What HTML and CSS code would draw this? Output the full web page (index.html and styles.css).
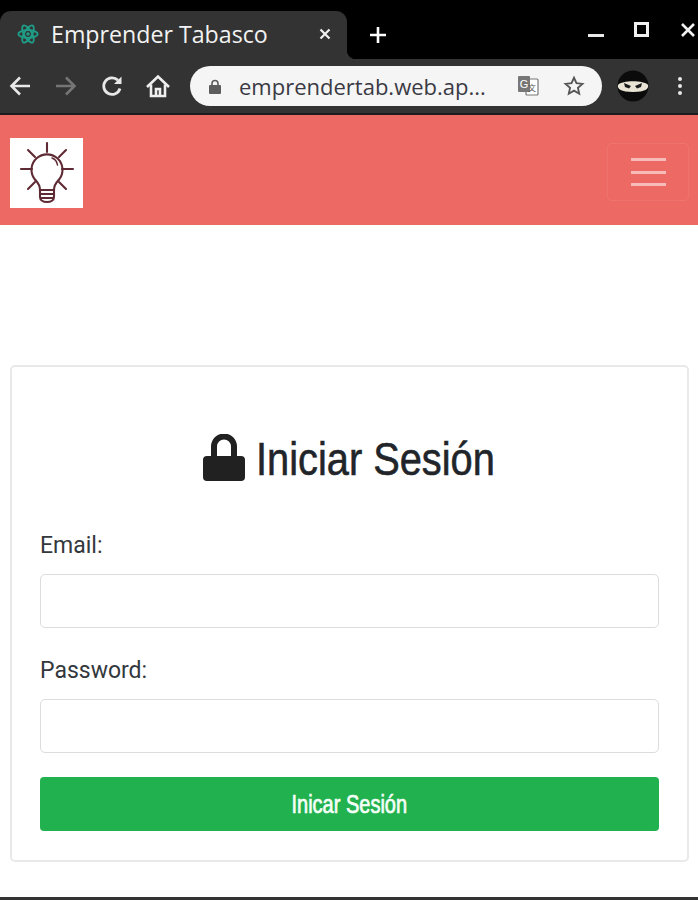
FILE: index.html
```html
<!DOCTYPE html>
<html lang="es">
<head>
    <meta charset="UTF-8">
    <meta name="viewport" content="width=device-width, initial-scale=1.0">
    <title>Emprender Tabasco</title>
    <link rel="stylesheet" href="styles.css">
</head>
<body>
    <div class="tabStrip">
        <div class="tab">
            <svg class="tabIcon" viewBox="0 0 24 24" fill="none" stroke="#1f9d87" stroke-width="2">
                <ellipse cx="12" cy="12" rx="10.5" ry="4.2"/>
                <ellipse cx="12" cy="12" rx="10.5" ry="4.2" transform="rotate(60 12 12)"/>
                <ellipse cx="12" cy="12" rx="10.5" ry="4.2" transform="rotate(120 12 12)"/>
                <circle cx="12" cy="12" r="2" fill="#1f9d87" stroke="none"/>
            </svg>
            <span class="tabTitle">Emprender Tabasco</span>
            <svg class="tabClose" viewBox="0 0 12 12" stroke="#f1f1f1" stroke-width="2.2">
                <path d="M1.5 1.5l9 9M10.5 1.5l-9 9"/>
            </svg>
        </div>
        <svg class="newTab" viewBox="0 0 18 18" stroke="#fff" stroke-width="2.6">
            <path d="M9 1v16M1 9h16"/>
        </svg>
        <div class="windowButtons">
            <svg class="winMin" viewBox="0 0 16 4" fill="#e8e8e8"><rect width="16" height="3"/></svg>
            <svg class="winMax" viewBox="0 0 15 15" fill="none" stroke="#f0f0f0" stroke-width="3"><rect x="1.5" y="1.5" width="12" height="12"/></svg>
            <svg class="winClose" viewBox="0 0 14 14" stroke="#f0f0f0" stroke-width="2.6"><path d="M1 1l12 12M13 1L1 13"/></svg>
        </div>
    </div>

    <div class="toolbar">
        <svg class="navIcon" viewBox="0 0 24 24" fill="none" stroke="#e8e8e8" stroke-width="2.6"><path d="M22 12H4M12 3.5L3.5 12l8.5 8.5"/></svg>
        <svg class="navIcon" viewBox="0 0 24 24" fill="none" stroke="#757575" stroke-width="2.6"><path d="M2 12h18M12 3.5l8.5 8.5-8.5 8.5"/></svg>
        <svg class="navIcon" viewBox="0 0 24 24" fill="none" stroke="#e8e8e8" stroke-width="2.8"><path d="M20 14.5A8.3 8.3 0 1 1 18 6.3"/><path d="M21.5 2.5v7.5H14z" fill="#e8e8e8" stroke="none"/></svg>
        <svg class="navIcon" viewBox="0 0 24 24" fill="none" stroke="#efefef" stroke-width="2.6"><path d="M1 13L12 2.500 23 13"/><path d="M5 10.500V22h14V10.500"/><path d="M10 22v-7h4v7"/></svg>
        <div class="omnibox">
            <svg class="lockSmall" viewBox="0 0 12 15"><path d="M3 7V4.500a3 3 0 0 1 6 0V7" fill="none" stroke="#5d5d5d" stroke-width="1.6"/><rect y="6" width="12" height="9" rx="1" fill="#5d5d5d"/></svg>
            <span class="url">emprendertab.web.ap...</span>
            <svg class="translate" viewBox="0 0 22 22">
                <rect x="9" y="4" width="12" height="16" rx="1" fill="#fff" stroke="#777" stroke-width="1.2"/>
                <rect x="1" y="1" width="12" height="16" rx="1" fill="#777"/>
                <text x="7" y="13" class="translateG">G</text>
                <text x="15" y="16" class="translateJ">文</text>
            </svg>
            <svg class="star" viewBox="0 0 24 24" fill="none" stroke="#555" stroke-width="2"><path d="M12 3l2.700 6 6.500.7-4.900 4.300 1.400 6.400-5.700-3.300-5.700 3.300 1.400-6.400-4.900-4.300 6.500-.7z"/></svg>
        </div>
        <svg class="avatar" viewBox="0 0 32 32">
            <circle cx="16" cy="16" r="15.500" fill="#0b0b0b"/>
            <path d="M1 15c4-5 26-5 30 0 1 4-3 7-15 7S0 19 1 15z" fill="#e9e3d6"/>
            <path d="M7 13l7 3-2 2.500-4-1.500zM25 13l-7 3 2 2.500 4-1.500z" fill="#1a1a1a"/>
        </svg>
        <svg class="menuDots" viewBox="0 0 4 18" fill="#e8e8e8"><circle cx="2" cy="2" r="2"/><circle cx="2" cy="9" r="2"/><circle cx="2" cy="16" r="2"/></svg>
    </div>

    <nav class="navbar">
        <div class="brand">
            <svg class="brandLogo" viewBox="0 0 73 70" fill="none" stroke="#5e2a33" stroke-width="2.1" stroke-linecap="round">
                <path d="M37 5v9M18 12l7 7M56 12l-7 7M11 31h11M52 31h11M25 44l-7 7M49 44l7 7"/>
                <path d="M30 52c0-6-3-8-5.500-11a15.500 15.500 0 1 1 25 0c-2.500 3-5.500 5-5.500 11z"/>
                <path d="M42 20c3 1 5 4 5.500 7" stroke-width="1.500"/>
                <path d="M30 52v7c0 3 3 5 7 5s7-2 7-5v-7M30 56h14M31 60h12"/>
            </svg>
        </div>
        <button class="navToggle">
            <span></span><span></span><span></span>
        </button>
    </nav>

    <main class="content">
        <div class="loginCard">
            <h1 class="loginTitle">
                <svg class="lockIcon" viewBox="0 0 42 47"><path d="M11 24V12.500a10 10 0 0 1 20 0V24" fill="none" stroke="#212121" stroke-width="6"/><rect y="22" width="42" height="25" rx="4" fill="#212121"/></svg>
                <span class="titleText">Iniciar Sesión</span>
            </h1>
            <form class="loginForm">
                <label class="fieldLabel" for="email">Email:</label>
                <input class="fieldInput" type="email" id="email">
                <label class="fieldLabel" for="password">Password:</label>
                <input class="fieldInput" type="password" id="password">
                <button class="submitButton" type="button"><span class="submitText">Inicar Sesión</span></button>
            </form>
        </div>
    </main>

    <div class="bottomEdge"></div>
</body>
</html>
```

FILE: styles.css
```css
html, body {
    margin: 0;
    height: 900px;
    overflow: hidden;
}

body {
    display: flex;
    flex-direction: column;
    background-color: #fff;
    font-family: Roboto, "Liberation Sans", sans-serif;
    color: #212529;
}

/* browser window */
.tabStrip {
    height: 59px;
    flex: none;
    display: flex;
    align-items: flex-end;
    background-color: #000;
}

.tab {
    position: relative;
    width: 347px;
    height: 48px;
    box-sizing: border-box;
    padding: 0 16px 2px 17px;
    display: flex;
    align-items: center;
    background-color: #333;
    border-radius: 11px 11px 0 0;
}

/* little curve where the tab meets the toolbar */
.tab::after {
    content: "";
    position: absolute;
    right: -9px;
    bottom: 0;
    width: 9px;
    height: 9px;
    background: radial-gradient(circle at top right, transparent 9px, #333 9.5px);
}

.tabIcon {
    width: 22px;
    height: 22px;
    flex: none;
}

.tabTitle {
    margin-left: 12px;
    flex: 1;
    color: #f2f2f2;
    font-family: "Open Sans", sans-serif;
    font-size: 23.2px;
    white-space: nowrap;
}

.tabClose {
    width: 12px;
    height: 12px;
    flex: none;
}

.newTab {
    width: 18px;
    height: 18px;
    margin: 0 0 15px 22px;
    flex: none;
}

.windowButtons {
    margin-left: auto;
    align-self: flex-start;
    padding: 22px 3px 0 0;
    display: flex;
    align-items: flex-start;
}

.winMin {
    width: 16px;
    height: 4px;
    margin-top: 12px;
}

.winMax {
    width: 15px;
    height: 15px;
    margin-left: 30px;
}

.winClose {
    width: 14px;
    height: 14px;
    margin: 1px 0 0 32px;
}

.toolbar {
    height: 56px;
    flex: none;
    box-sizing: border-box;
    padding: 0 16px 0 8px;
    display: flex;
    align-items: center;
    background-color: #333;
    border-bottom: 2px solid #1c1c1c;
}

.navIcon {
    width: 24px;
    height: 24px;
    margin-right: 22px;
    flex: none;
}

.navIcon:nth-child(4) {
    margin-right: 20px;
}

.omnibox {
    width: 412px;
    height: 40px;
    box-sizing: border-box;
    padding: 0 17px 0 19px;
    flex: none;
    display: flex;
    align-items: center;
    background-color: #f5f5f5;
    border-radius: 20px;
}

.lockSmall {
    width: 12px;
    height: 15px;
    flex: none;
}

.url {
    margin-left: 18px;
    flex: 1;
    color: #3a3a44;
    font-family: "Open Sans", sans-serif;
    font-size: 22px;
    white-space: nowrap;
}

.translate {
    width: 22px;
    height: 22px;
    margin-right: 24px;
    flex: none;
}

.translateG {
    fill: #fff;
    font-size: 11px;
    font-family: "Liberation Sans", sans-serif;
    text-anchor: middle;
}

.translateJ {
    fill: #555;
    font-size: 8px;
    font-family: "Noto Sans CJK SC", sans-serif;
    text-anchor: middle;
}

.star {
    width: 22px;
    height: 22px;
    flex: none;
}

.avatar {
    width: 32px;
    height: 32px;
    margin-left: 15px;
    flex: none;
}

.menuDots {
    width: 4px;
    height: 18px;
    margin-left: auto;
    flex: none;
}

/* page */
.navbar {
    height: 110px;
    flex: none;
    box-sizing: border-box;
    padding: 23px 9px 17px 10px;
    display: flex;
    justify-content: space-between;
    align-items: flex-start;
    background-color: #ed6964;
}

.brand {
    width: 73px;
    height: 70px;
    background-color: #fff;
}

.brandLogo {
    width: 73px;
    height: 70px;
    display: block;
}

.navToggle {
    width: 82px;
    height: 58px;
    margin-top: 5px;
    padding: 0;
    display: flex;
    flex-direction: column;
    justify-content: center;
    align-items: center;
    gap: 9.5px;
    background: none;
    border: 1px solid rgba(255, 255, 255, 0.07);
    border-radius: 5px;
}

.navToggle span {
    width: 35px;
    height: 3px;
    background-color: rgba(255, 255, 255, 0.55);
}

.content {
    flex: 1;
    padding: 140px 9px 0 10px;
}

.loginCard {
    height: 497px;
    box-sizing: border-box;
    padding: 61px 28px 0;
    background-color: #fff;
    border: 2px solid #e9e9e9;
    border-radius: 5px;
}

.loginTitle {
    margin: 0 0 42px;
    display: flex;
    justify-content: center;
    align-items: center;
    gap: 11px;
    height: 62px;
    color: #212529;
    font-family: "Liberation Sans", sans-serif;
    font-size: 46px;
    font-weight: 400;
}

.titleText {
    margin-right: -37px;
    transform: scaleX(0.865);
    transform-origin: left center;
    -webkit-text-stroke: 0.6px #212529;
}

.lockIcon {
    width: 42px;
    height: 47px;
    margin-top: -4px;
    flex: none;
}

.loginForm {
    display: flex;
    flex-direction: column;
}

.fieldLabel {
    margin-bottom: 14px;
    color: #33383d;
    font-size: 23px;
    line-height: 28px;
}

.fieldInput {
    height: 54px;
    box-sizing: border-box;
    margin-bottom: 29px;
    background-color: #fff;
    border: 1.5px solid #dcdcdc;
    border-radius: 5px;
}

.fieldInput:last-of-type {
    margin-bottom: 24px;
}

.submitButton {
    height: 54px;
    background-color: #21b14e;
    border: none;
    border-radius: 4px;
    color: #f4fff7;
    font-family: "Liberation Sans", sans-serif;
    font-size: 25px;
    font-weight: 400;
}

.submitText {
    display: inline-block;
    transform: scaleX(0.8);
    -webkit-text-stroke: 0.7px #f4fff7;
}

.bottomEdge {
    height: 3px;
    flex: none;
    background-color: #333;
}
```
